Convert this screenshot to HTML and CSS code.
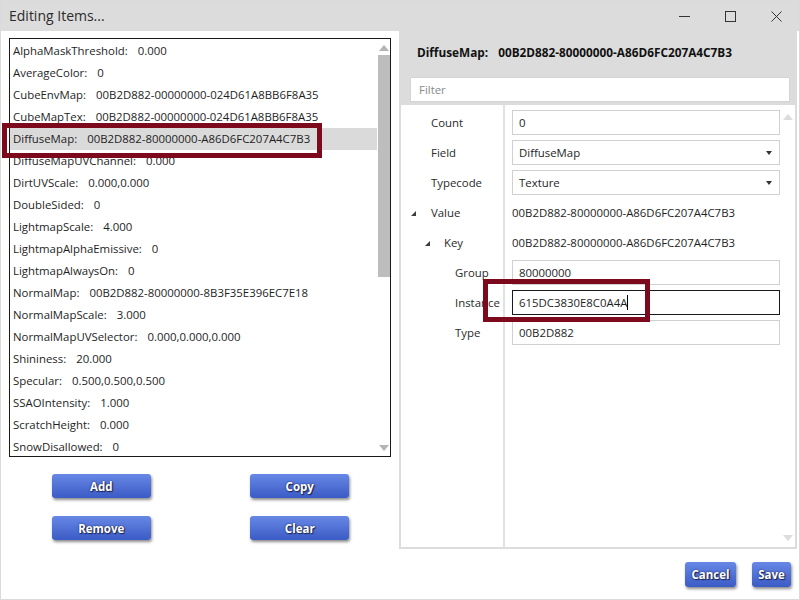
FILE: index.html
```html
<!DOCTYPE html>
<html lang="en">
<head>
  <meta charset="UTF-8">
  <title>Editing Items...</title>
  <link rel="stylesheet" href="styles.css">
</head>
<body>

  <div class="window">

    <!-- title bar -->
    <div class="titlebar">
      <span class="title">Editing Items...</span>
      <div class="controls">
        <span class="ctl">
          <svg width="11" height="11" viewBox="0 0 11 11"><path d="M0 5.5H11" stroke="#333" stroke-width="1"/></svg>
        </span>
        <span class="ctl">
          <svg width="11" height="11" viewBox="0 0 11 11"><rect x="0.5" y="0.5" width="10" height="10" fill="none" stroke="#333" stroke-width="1"/></svg>
        </span>
        <span class="ctl">
          <svg width="11" height="11" viewBox="0 0 11 11"><path d="M0.5 0.5L10.5 10.5M10.5 0.5L0.5 10.5" stroke="#333" stroke-width="1"/></svg>
        </span>
      </div>
    </div>

    <div class="client">

      <!-- item list + buttons -->
      <div class="left">
        <div class="listbox">
          <ul class="items">
            <li><span class="k">AlphaMaskThreshold:</span><span class="v">0.000</span></li>
            <li><span class="k">AverageColor:</span><span class="v">0</span></li>
            <li><span class="k">CubeEnvMap:</span><span class="v">00B2D882-00000000-024D61A8BB6F8A35</span></li>
            <li><span class="k">CubeMapTex:</span><span class="v">00B2D882-00000000-024D61A8BB6F8A35</span></li>
            <li class="selected"><span class="k">DiffuseMap:</span><span class="v">00B2D882-80000000-A86D6FC207A4C7B3</span></li>
            <li><span class="k">DiffuseMapUVChannel:</span><span class="v">0.000</span></li>
            <li><span class="k">DirtUVScale:</span><span class="v">0.000,0.000</span></li>
            <li><span class="k">DoubleSided:</span><span class="v">0</span></li>
            <li><span class="k">LightmapScale:</span><span class="v">4.000</span></li>
            <li><span class="k">LightmapAlphaEmissive:</span><span class="v">0</span></li>
            <li><span class="k">LightmapAlwaysOn:</span><span class="v">0</span></li>
            <li><span class="k">NormalMap:</span><span class="v">00B2D882-80000000-8B3F35E396EC7E18</span></li>
            <li><span class="k">NormalMapScale:</span><span class="v">3.000</span></li>
            <li><span class="k">NormalMapUVSelector:</span><span class="v">0.000,0.000,0.000</span></li>
            <li><span class="k">Shininess:</span><span class="v">20.000</span></li>
            <li><span class="k">Specular:</span><span class="v">0.500,0.500,0.500</span></li>
            <li><span class="k">SSAOIntensity:</span><span class="v">1.000</span></li>
            <li><span class="k">ScratchHeight:</span><span class="v">0.000</span></li>
            <li><span class="k">SnowDisallowed:</span><span class="v">0</span></li>
          </ul>
          <div class="vscroll">
            <span class="arrow-up"></span>
            <span class="thumb"></span>
            <span class="arrow-down"></span>
          </div>
        </div>

        <div class="actions">
          <button class="btn">Add</button>
          <button class="btn">Copy</button>
          <button class="btn">Remove</button>
          <button class="btn">Clear</button>
        </div>
      </div>

      <!-- property editor -->
      <div class="right">
        <div class="panel">
          <div class="panel-head">
            <div class="head-title"><span>DiffuseMap:</span><span class="head-val">00B2D882-80000000-A86D6FC207A4C7B3</span></div>
            <div class="filter">Filter</div>
          </div>

          <div class="props">
            <div class="rows">
              <div class="row">
                <div class="lbl">Count</div>
                <div class="val"><div class="field">0</div></div>
              </div>
              <div class="row">
                <div class="lbl">Field</div>
                <div class="val"><div class="field combo">DiffuseMap<span class="caret"></span></div></div>
              </div>
              <div class="row">
                <div class="lbl">Typecode</div>
                <div class="val"><div class="field combo">Texture<span class="caret"></span></div></div>
              </div>
              <div class="row">
                <div class="lbl lvl0"><span class="expander"></span>Value</div>
                <div class="val"><span class="plain">00B2D882-80000000-A86D6FC207A4C7B3</span></div>
              </div>
              <div class="row">
                <div class="lbl lvl1"><span class="expander"></span>Key</div>
                <div class="val"><span class="plain">00B2D882-80000000-A86D6FC207A4C7B3</span></div>
              </div>
              <div class="row">
                <div class="lbl lvl2">Group</div>
                <div class="val"><div class="field">80000000</div></div>
              </div>
              <div class="row">
                <div class="lbl lvl2">Instance</div>
                <div class="val"><div class="field focused">615DC3830E8C0A4A<span class="cursor"></span></div></div>
              </div>
              <div class="row">
                <div class="lbl lvl2">Type</div>
                <div class="val"><div class="field">00B2D882</div></div>
              </div>
            </div>
            <div class="pscroll">
              <span class="arrow-up light"></span>
              <span class="arrow-down light"></span>
            </div>
          </div>
        </div>

        <div class="footer">
          <button class="btn cancel">Cancel</button>
          <button class="btn save">Save</button>
        </div>
      </div>

    </div>

    <!-- red callouts drawn over the selected entry and the edited field -->
    <div class="callout callout-item"></div>
    <div class="callout callout-field"></div>

  </div>

</body>
</html>
```

FILE: styles.css
```css
* {
  box-sizing: border-box;
}
body {
  margin: 0;
  font-family: "Open Sans", "Liberation Sans", sans-serif;
  font-size: 11.4px;
  color: #1e1e1e;
}
.window {
  position: relative;
  width: 800px;
  height: 600px;
  border: 1px solid #dadada;
  background: #fff;
  overflow: hidden;
}

/* title bar */
.titlebar {
  height: 30px;
  background: #dcdcdc;
  display: flex;
  align-items: center;
}
.title {
  padding-left: 8px;
  font-size: 14px;
  color: #2b2b2b;
  padding-bottom: 1px;
}
.controls {
  margin-left: auto;
  display: flex;
  height: 100%;
}
.ctl {
  width: 46px;
  display: flex;
  align-items: center;
  justify-content: center;
}

.client {
  display: flex;
  height: 568px;
}

/* left column */
.left {
  width: 398px;
}
.listbox {
  margin: 7px 0 0 8px;
  width: 382px;
  height: 419px;
  border: 1px solid #1a1a1a;
  display: flex;
}
.items {
  list-style: none;
  margin: 0;
  padding: 1px 0 0 0;
  flex: 1;
}
.items li {
  height: 22px;
  line-height: 22px;
  padding-left: 3px;
  white-space: nowrap;
}
.items li.selected {
  background: #dadada;
}
.items .v {
  margin-left: 10px;
}
.vscroll {
  width: 13px;
  display: flex;
  flex-direction: column;
  align-items: center;
  padding-top: 6px;
}
.vscroll .thumb {
  width: 12px;
  height: 222px;
  margin-top: 4px;
  background: #bdbdbd;
}
.vscroll .arrow-down {
  margin-top: auto;
  margin-bottom: 5px;
}
.arrow-up {
  width: 0;
  height: 0;
  border-left: 5px solid transparent;
  border-right: 5px solid transparent;
  border-bottom: 6px solid #b4b4b4;
}
.arrow-down {
  width: 0;
  height: 0;
  border-left: 5px solid transparent;
  border-right: 5px solid transparent;
  border-top: 6px solid #b4b4b4;
}
.arrow-up.light {
  border-bottom-color: #dcdcdc;
}
.arrow-down.light {
  border-top-color: #dcdcdc;
}

.actions {
  margin-top: 17px;
  display: grid;
  grid-template-columns: 1fr 1fr;
  row-gap: 18px;
  justify-items: center;
  padding-left: 1px;
}

/* blue buttons */
.btn {
  width: 99px;
  height: 24px;
  border: none;
  border-radius: 3px;
  background: linear-gradient(#6888e6, #3b5bc6);
  box-shadow: 1px 2px 3px rgba(0, 0, 0, 0.45);
  color: #fff;
  font-family: "Open Sans", "Liberation Sans", sans-serif;
  font-weight: bold;
  font-size: 11.5px;
  text-shadow: 0 0 2px #1c2450, 1px 1px 1px #1c2450;
  padding: 0;
}
.btn.cancel {
  width: 51px;
  height: 25px;
}
.btn.save {
  width: 39px;
  height: 25px;
}

/* right column */
.right {
  width: 398px;
}
.panel {
  width: 398px;
  height: 518px;
  border: 2px solid #dcdcdc;
  display: flex;
  flex-direction: column;
}
.panel-head {
  background: #dcdcdc;
  padding: 10px 5px 3px 9px;
}
.head-title {
  height: 18px;
  line-height: 18px;
  padding-left: 7px;
  font-weight: bold;
  font-size: 11.8px;
  color: #111;
}
.head-val {
  margin-left: 10px;
}
.filter {
  margin-top: 16px;
  height: 25px;
  line-height: 23px;
  background: #fff;
  border: 1px solid #d4d4d4;
  padding-left: 8px;
  color: #8a8a8a;
}

.props {
  flex: 1;
  display: flex;
}
.rows {
  flex: 1;
  padding-top: 2px;
  background: linear-gradient(#e2e2e2, #e2e2e2) no-repeat 102px 0 / 2px 100%;
}
.row {
  height: 30px;
  display: grid;
  grid-template-columns: 102px 1fr;
  align-items: center;
}
.lbl {
  padding-left: 30px;
  color: #2a2a2a;
  display: flex;
  align-items: center;
}
.lbl.lvl0 {
  padding-left: 10px;
}
.lbl.lvl1 {
  padding-left: 24px;
}
.lbl.lvl2 {
  padding-left: 54px;
}
.expander {
  width: 0;
  height: 0;
  border-style: solid;
  border-width: 0 0 5px 5px;
  border-color: transparent transparent #3c3c3c transparent;
  margin-right: 15px;
  margin-top: 2px;
}
.lvl1 .expander {
  margin-right: 14px;
}
.val {
  padding-left: 9px;
}
.field {
  position: relative;
  height: 25px;
  line-height: 23px;
  border: 1px solid #d0d0d0;
  padding-left: 6px;
  background: #fff;
}
.field.focused {
  border-color: #1a1a1a;
}
.cursor {
  display: inline-block;
  width: 1px;
  height: 15px;
  background: #000;
  vertical-align: -3px;
}
.caret {
  position: absolute;
  right: 7px;
  top: 10px;
  width: 0;
  height: 0;
  border-left: 3.5px solid transparent;
  border-right: 3.5px solid transparent;
  border-top: 4px solid #333;
}
.pscroll {
  width: 15px;
  display: flex;
  flex-direction: column;
  align-items: center;
  padding: 9px 0 6px;
  justify-content: space-between;
}

.footer {
  display: flex;
  justify-content: flex-end;
  gap: 16px;
  padding: 13px 6px 0 0;
}

/* annotation frames */
.callout {
  position: absolute;
  border: 5px solid #7d0a1c;
}
.callout-item {
  left: 1px;
  top: 122px;
  width: 320px;
  height: 35px;
}
.callout-field {
  left: 482px;
  top: 278px;
  width: 167px;
  height: 43px;
}
```
